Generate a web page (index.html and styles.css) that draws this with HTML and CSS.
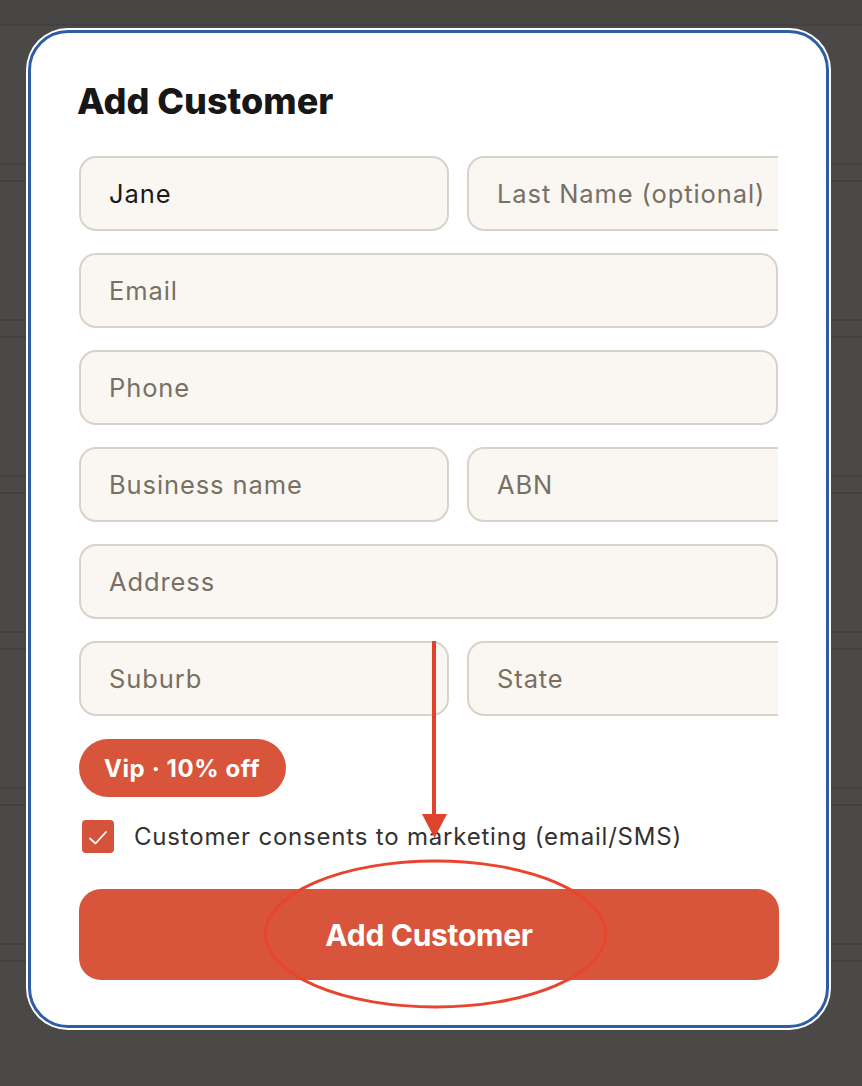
FILE: index.html
```html
<!DOCTYPE html>
<html lang="en">
<head>
<meta charset="utf-8">
<title>Add Customer</title>
<link rel="stylesheet" href="styles.css">
</head>
<body>
<div class="modal">
  <h1 class="title">Add Customer</h1>
  <div class="fields">
    <div class="pair">
      <input class="field filled" type="text" value="Jane">
      <input class="field" type="text" placeholder="Last Name (optional)">
    </div>
    <input class="field" type="text" placeholder="Email">
    <input class="field" type="text" placeholder="Phone">
    <div class="pair">
      <input class="field" type="text" placeholder="Business name">
      <input class="field" type="text" placeholder="ABN">
    </div>
    <input class="field" type="text" placeholder="Address">
    <div class="pair">
      <input class="field" type="text" placeholder="Suburb">
      <input class="field" type="text" placeholder="State">
    </div>
  </div>
  <div class="chip-row"><span class="chip">Vip · 10% off</span></div>
  <label class="consent">
    <span class="check"><svg viewBox="0 0 32 33" width="32" height="33"><path d="M8 18.5 L13.5 23.5 L24 12" fill="none" stroke="#fff" stroke-width="1.8" stroke-linecap="round" stroke-linejoin="round"/></svg></span>
    <span class="consent-text">Customer consents to marketing (email/SMS)</span>
  </label>
  <button class="submit" type="button">Add Customer</button>
</div>
<svg class="annotation" width="862" height="1086" viewBox="0 0 862 1086">
  <line x1="434" y1="641" x2="434" y2="816" stroke="#e0432c" stroke-width="4"/>
  <polygon points="422,814 447,814 434.5,838" fill="#e0432c"/>
  <ellipse cx="435.5" cy="934" rx="170" ry="73" fill="none" stroke="#e8442e" stroke-width="3"/>
</svg>
</body>
</html>
```
FILE: styles.css
```css
html, body {
  margin: 0;
  padding: 0;
}
body {
  position: relative;
  width: 862px;
  height: 1086px;
  overflow: hidden;
  box-sizing: border-box;
  padding-top: 30px;
  font-family: Inter, "Noto Sans", "Liberation Sans", sans-serif;
  background-color: #4a4947;
  background-image:
    linear-gradient(to bottom, #474644 0 24px, #42413f 24px 26px, transparent 26px),
    repeating-linear-gradient(to bottom,
      #42413f 163px, #42413f 165px,
      transparent 165px, transparent 180px,
      #42413f 180px, #42413f 182px,
      transparent 182px, transparent 319px);
}
.modal {
  box-sizing: border-box;
  width: 801px;
  height: 998px;
  margin-left: 28px;
  background: #fff;
  border: 3px solid #2e5da6;
  border-radius: 40px;
  box-shadow: 0 0 0 2px #fff;
  padding: 46px 48px 0 48px;
  display: flex;
  flex-direction: column;
}
.title {
  margin: 0 0 0 -2px;
  font-size: 36px;
  line-height: 44px;
  font-weight: 800;
  color: #171717;
  letter-spacing: 0;
}
.fields {
  margin-top: 33px;
  display: flex;
  flex-direction: column;
  gap: 22px;
}
.pair {
  display: grid;
  grid-template-columns: 370px 370px;
  column-gap: 18px;
  overflow: hidden;
  width: 699px;
}
.field {
  box-sizing: border-box;
  width: 100%;
  height: 75px;
  margin: 0;
  padding: 0 0 0 28px;
  border: 2px solid #d8d3c9;
  border-radius: 17px;
  background: #faf7f2;
  font-family: Inter, "Noto Sans", "Liberation Sans", sans-serif;
  font-size: 25.5px;
  letter-spacing: 0.9px;
  color: #1a1a1a;
  outline: none;
}
.field::placeholder {
  color: #777064;
  opacity: 1;
}
.chip-row {
  margin-top: 23px;
  display: flex;
}
.chip {
  display: inline-flex;
  align-items: center;
  height: 58px;
  padding: 0 26px 0 25px;
  border-radius: 29px;
  background: #d8553b;
  color: #fff;
  font-size: 24px;
  font-weight: 700;
  letter-spacing: 0.6px;
}
.consent {
  margin-top: 23px;
  display: flex;
  align-items: center;
  gap: 20px;
  padding-left: 3px;
}
.check {
  width: 32px;
  height: 33px;
  border-radius: 4px;
  background: #d6533b;
  display: flex;
}
.consent-text {
  font-size: 24px;
  letter-spacing: 0.8px;
  color: #333230;
}
.submit {
  margin-top: 36px;
  width: 700px;
  height: 91px;
  border: 0;
  border-radius: 22px;
  background: #d8553b;
  color: #fff;
  font-family: Inter, "Noto Sans", "Liberation Sans", sans-serif;
  font-size: 30px;
  font-weight: 700;
  letter-spacing: -0.3px;
  padding: 0;
}
.annotation {
  position: absolute;
  left: 0;
  top: 0;
  pointer-events: none;
}
```
